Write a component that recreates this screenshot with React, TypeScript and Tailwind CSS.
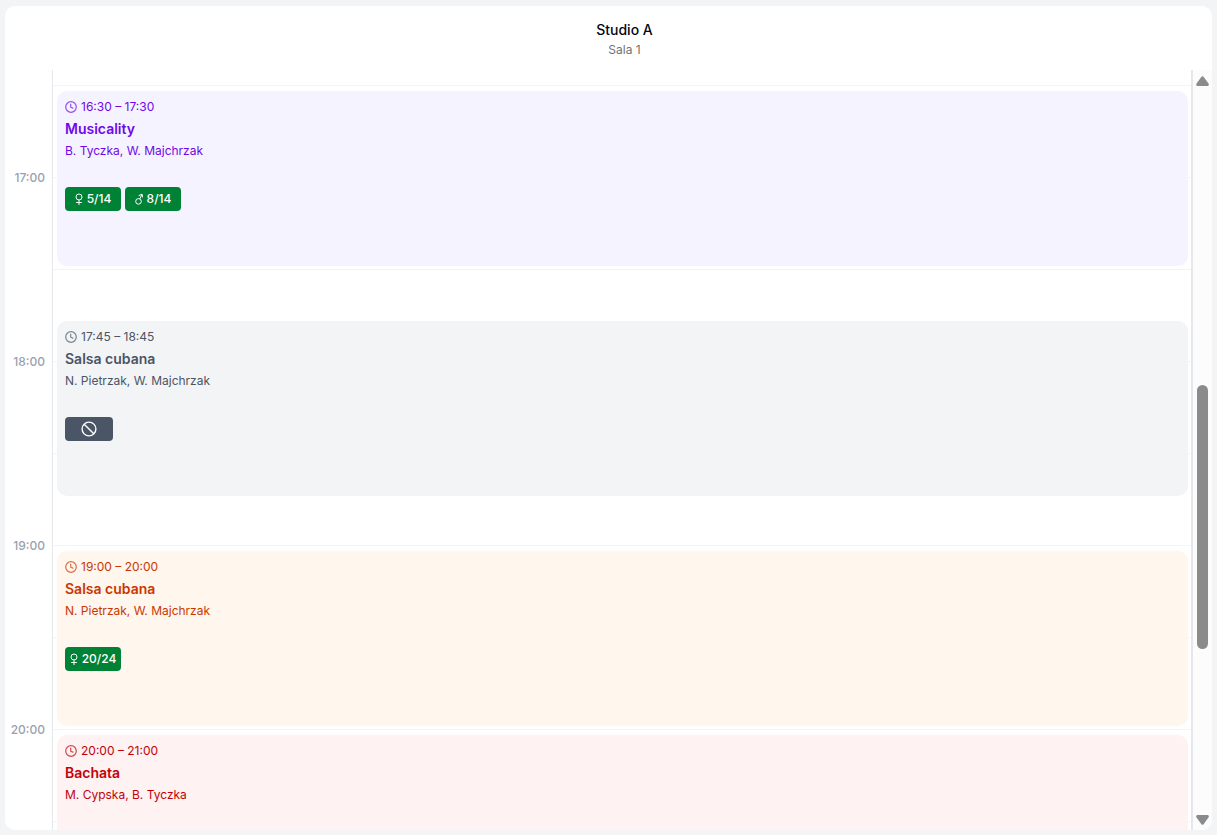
import clsx from 'clsx';

type Tone = 'violet' | 'gray' | 'orange' | 'red';

type Badge = { kind: 'female' | 'male' | 'blocked'; label?: string };

type Lesson = {
  start: string;
  end: string;
  title: string;
  teachers: string;
  tone: Tone;
  row: string;
  badges: Badge[];
};

const tones: Record<Tone, string> = {
  violet: 'bg-violet-50 text-violet-700',
  gray: 'bg-gray-100 text-gray-600',
  orange: 'bg-orange-50 text-orange-700',
  red: 'bg-red-50 text-red-700',
};

// one grid row is a quarter of an hour, row 2 starts at 16:30
const lessons: Lesson[] = [
  {
    start: '16:30',
    end: '17:30',
    title: 'Musicality',
    teachers: 'B. Tyczka, W. Majchrzak',
    tone: 'violet',
    row: 'row-[2/span_4]',
    badges: [
      { kind: 'female', label: '5/14' },
      { kind: 'male', label: '8/14' },
    ],
  },
  {
    start: '17:45',
    end: '18:45',
    title: 'Salsa cubana',
    teachers: 'N. Pietrzak, W. Majchrzak',
    tone: 'gray',
    row: 'row-[7/span_4]',
    badges: [{ kind: 'blocked' }],
  },
  {
    start: '19:00',
    end: '20:00',
    title: 'Salsa cubana',
    teachers: 'N. Pietrzak, W. Majchrzak',
    tone: 'orange',
    row: 'row-[12/span_4]',
    badges: [{ kind: 'female', label: '20/24' }],
  },
  {
    start: '20:00',
    end: '21:00',
    title: 'Bachata',
    teachers: 'M. Cypska, B. Tyczka',
    tone: 'red',
    row: 'row-[16/span_4]',
    badges: [],
  },
];

const halfHours = [
  { row: 'row-[2/span_2]' },
  { row: 'row-[4/span_2]', label: '17:00' },
  { row: 'row-[6/span_2]' },
  { row: 'row-[8/span_2]', label: '18:00' },
  { row: 'row-[10/span_2]' },
  { row: 'row-[12/span_2]', label: '19:00' },
  { row: 'row-[14/span_2]' },
  { row: 'row-[16/span_2]', label: '20:00' },
  { row: 'row-[18/span_2]' },
];

function ClockIcon() {
  return (
    <svg viewBox="0 0 12 12" className="size-3 shrink-0 opacity-70" fill="none" stroke="currentColor" strokeWidth="1.2" strokeLinecap="round">
      <circle cx="6" cy="6" r="5.3" />
      <path d="M5.7 3.2v3l2.2.9" />
    </svg>
  );
}

function FemaleIcon() {
  return (
    <svg viewBox="0 0 8 12" className="h-3 w-2 shrink-0" fill="none" stroke="currentColor">
      <circle cx="4" cy="4" r="3" />
      <path d="M4 7v5M1.2 9.5h5.6" />
    </svg>
  );
}

function MaleIcon() {
  return (
    <svg viewBox="0 0 8 12" className="h-3 w-2 shrink-0" fill="none" stroke="currentColor">
      <circle cx="3.5" cy="8.4" r="2.8" />
      <path d="M4.8 5.9 7 1.3M3.6 2.7 7 1.2l.6 3.3" />
    </svg>
  );
}

function BlockedIcon() {
  return (
    <svg viewBox="0 0 16 16" className="size-4" fill="none" stroke="currentColor" strokeWidth="1.4">
      <circle cx="8" cy="8" r="6.9" />
      <path d="m3.2 3.2 9.6 9.6" />
    </svg>
  );
}

function LessonBadge({ badge }: { badge: Badge }) {
  if (badge.kind === 'blocked') {
    return (
      <span className="flex h-6 w-12 items-center justify-center rounded bg-gray-600 text-white">
        <BlockedIcon />
      </span>
    );
  }
  return (
    <span className="flex h-6 min-w-14 items-center justify-center gap-1 rounded bg-green-700 px-1 text-xs font-medium text-white">
      {badge.kind === 'female' ? <FemaleIcon /> : <MaleIcon />}
      {badge.label}
    </span>
  );
}

function LessonCard({ lesson }: { lesson: Lesson }) {
  return (
    <article
      className={clsx(
        'col-start-2 mx-[5px] mt-[6px] mb-[3px] flex flex-col gap-1 rounded-[10px] p-2 text-xs',
        tones[lesson.tone],
        lesson.row,
      )}
    >
      <div className="flex items-center gap-1">
        <ClockIcon />
        <span>
          {lesson.start} – {lesson.end}
        </span>
      </div>
      <h3 className="text-sm leading-5 font-semibold">{lesson.title}</h3>
      <p>{lesson.teachers}</p>
      <div className="mt-6 flex gap-1">
        {lesson.badges.map((badge) => (
          <LessonBadge key={badge.kind} badge={badge} />
        ))}
      </div>
    </article>
  );
}

function Scrollbar() {
  return (
    <div className="flex w-[19px] shrink-0 flex-col items-center bg-[#fcfcfc] pt-[5px] pb-1 text-[#8b8b8b]">
      <svg viewBox="0 0 13 12" className="h-3 w-[13px]" fill="currentColor">
        <path d="M5.4 1.8q1.1-1.2 2.2 0l5 7q.7 1.9-.8 2.2H1.2q-1.5-.3-.8-2.2z" />
      </svg>
      <div className="flex min-h-0 flex-1 flex-col items-center">
        <div className="flex-[298]" />
        <div className="w-[11px] flex-[264] rounded-full bg-[#8b8b8b]" />
        <div className="flex-[165]" />
      </div>
      <svg viewBox="0 0 13 12" className="h-3 w-[13px]" fill="currentColor">
        <path d="M5.4 10.2q1.1 1.2 2.2 0l5-7q.7-1.9-.8-2.2H1.2q-1.5.3-.8 2.2z" />
      </svg>
    </div>
  );
}

export default function App() {
  return (
    <div className="flex h-screen flex-col bg-gray-100 px-[5px] pt-[6px] pb-[5px] font-['Inter',sans-serif]">
      <main className="flex min-h-0 flex-1 flex-col overflow-hidden rounded-[10px] bg-white">
        <header className="flex h-16 shrink-0 flex-col items-center pt-[14px] pr-4 pl-12 text-center">
          <h2 className="text-sm leading-5 font-medium text-gray-950">Studio A</h2>
          <p className="text-xs leading-5 text-neutral-500">Sala 1</p>
        </header>

        <div className="flex min-h-0 flex-1 overflow-hidden">
          <div className="grid flex-1 auto-rows-[46px] grid-cols-[47px_minmax(0,1fr)] grid-rows-[15px] overflow-hidden">
            <div className="col-start-2 row-[1/span_19] border-r-2 border-l border-gray-200" />
            {halfHours.map((slot) => (
              <div key={slot.row} className={clsx('col-start-2 mr-[2px] ml-px border-t border-gray-100', slot.row)} />
            ))}
            {halfHours.map(
              (slot) =>
                slot.label && (
                  <time
                    key={slot.label}
                    className={clsx('col-start-1 -mt-[7px] pr-[7px] text-right text-xs font-medium text-gray-400', slot.row)}
                  >
                    {slot.label}
                  </time>
                ),
            )}
            {lessons.map((lesson) => (
              <LessonCard key={lesson.start} lesson={lesson} />
            ))}
          </div>
          <Scrollbar />
        </div>
      </main>
    </div>
  );
}
